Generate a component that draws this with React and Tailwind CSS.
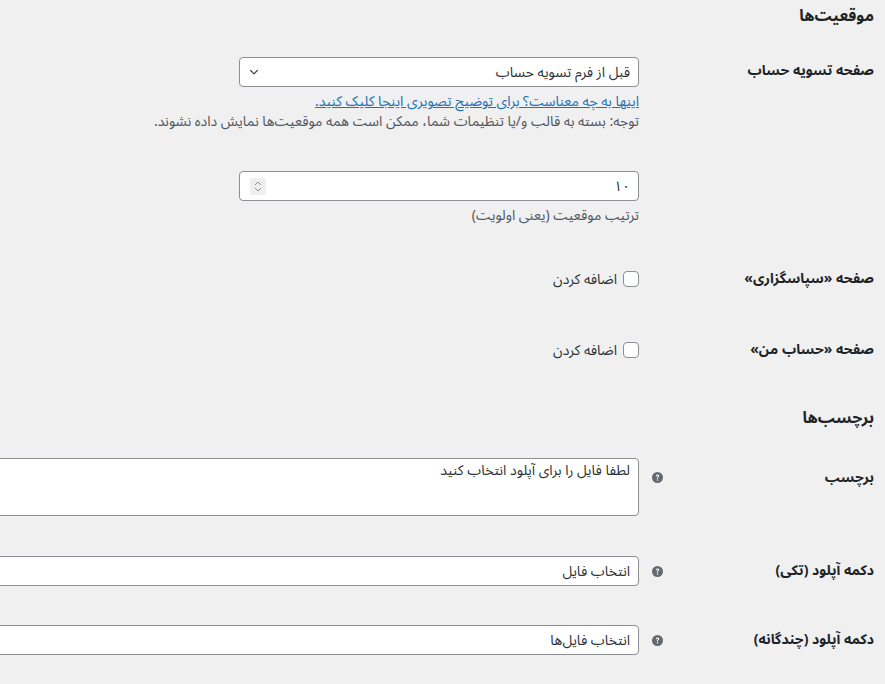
import React from "react";

function Help() {
  return (
    <svg width="11" height="11" viewBox="0 0 16 16" className="shrink-0 block">
      <circle cx="8" cy="8" r="8" fill="#646970" />
      <path d="M5.6 6.1c0-1.4 1.1-2.3 2.5-2.3 1.4 0 2.4.9 2.4 2.1 0 .9-.5 1.4-1.2 1.8-.6.4-.8.6-.8 1.2v.4H7v-.5c0-.9.4-1.4 1.1-1.8.6-.4.8-.6.8-1.1 0-.5-.4-.9-.9-.9s-.9.4-.9 1H5.6z" fill="#fff" />
      <circle cx="8" cy="11.6" r="1" fill="#fff" />
    </svg>
  );
}

function Chevron() {
  return (
    <svg width="12" height="12" viewBox="0 0 20 20" className="shrink-0 block">
      <path d="M4.5 7.5l5.5 5.5 5.5-5.5" fill="none" stroke="#3c434a" strokeWidth="2" strokeLinecap="round" strokeLinejoin="round" />
    </svg>
  );
}

function Spinner() {
  return (
    <div className="w-[16px] h-[17px] bg-[#efefef] rounded-[2px] flex flex-col items-center justify-center gap-[1px]">
      <svg width="8" height="5" viewBox="0 0 8 5" className="block"><path d="M1 4l3-3 3 3" fill="none" stroke="#8c8f94" strokeWidth="1" /></svg>
      <svg width="8" height="5" viewBox="0 0 8 5" className="block"><path d="M1 1l3 3 3-3" fill="none" stroke="#8c8f94" strokeWidth="1" /></svg>
    </div>
  );
}

function Checkbox() {
  return <span className="w-[16px] h-[16px] shrink-0 rounded-[4px] border border-[#8c8f94] bg-white" />;
}

export default function App() {
  return (
    <div
      dir="rtl"
      className="w-[885px] h-[684px] overflow-hidden bg-[#f0f0f1] pr-[11px] text-[#1d2327]"
      style={{ fontFamily: '"Noto Sans Arabic", "Vazirmatn", "DejaVu Sans", sans-serif' }}
    >
      <h2 className="h-[32px] leading-[32px] text-[16px] font-bold">موقعیت‌ها</h2>

      {/* Row 1 */}
      <div className="mt-[10px] flex">
        <div className="w-[225px] shrink-0 pt-[20px] text-[14px] leading-[18px] font-bold">صفحه تسویه حساب</div>
        <div className="flex-1 min-w-0 pr-[10px] pt-[15px]">
          <div className="w-[400px] h-[30px] rounded-[4px] border border-[#8c8f94] bg-white flex items-center justify-between pr-[8px] pl-[8px] text-[14px] text-[#2c3338]">
            <span>قبل از فرم تسویه حساب</span>
            <Chevron />
          </div>
          <p className="mt-[5px] leading-[20px] text-[14px]">
            <a className="text-[#2271b1] underline">اینها به چه معناست؟ برای توضیح تصویری اینجا کلیک کنید.</a>
          </p>
          <p className="leading-[20px] text-[14px] text-[#50575e]">
            توجه: بسته به قالب و/یا تنظیمات شما، ممکن است همه موقعیت‌ها نمایش داده نشوند.
          </p>
        </div>
      </div>

      {/* Row 2 */}
      <div className="mt-[39px] flex">
        <div className="w-[225px] shrink-0" />
        <div className="flex-1 min-w-0 pr-[10px]">
          <div className="w-[400px] h-[30px] rounded-[4px] border border-[#8c8f94] bg-white flex items-center justify-between pr-[8px] pl-[10px] text-[14px] text-[#2c3338]">
            <span>۱۰</span>
            <Spinner />
          </div>
          <p className="mt-[5px] leading-[20px] text-[14px] text-[#50575e]">ترتیب موقعیت (یعنی اولویت)</p>
        </div>
      </div>

      {/* Row 3 */}
      <div className="mt-[45px] flex items-center h-[16px]">
        <div className="w-[225px] shrink-0 text-[14px] font-bold leading-[18px]">صفحه «سپاسگزاری»</div>
        <div className="flex-1 min-w-0 pr-[10px] flex items-center gap-[6px] text-[14px] text-[#2c3338]">
          <Checkbox />
          <span>اضافه کردن</span>
        </div>
      </div>

      {/* Row 4 */}
      <div className="mt-[55px] flex items-center h-[16px]">
        <div className="w-[225px] shrink-0 text-[14px] font-bold leading-[18px]">صفحه «حساب من»</div>
        <div className="flex-1 min-w-0 pr-[10px] flex items-center gap-[6px] text-[14px] text-[#2c3338]">
          <Checkbox />
          <span>اضافه کردن</span>
        </div>
      </div>

      <h2 className="mt-[44px] h-[32px] leading-[32px] text-[16px] font-bold">برچسب‌ها</h2>

      {/* Row 5 */}
      <div className="mt-[24px] flex">
        <div className="w-[225px] shrink-0 pt-[7px] flex items-center h-[32px]">
          <span className="text-[14px] font-bold leading-[18px]">برچسب</span>
          <span className="mr-auto ml-[3px]"><Help /></span>
        </div>
        <div className="flex-1 min-w-0 pr-[10px]">
          <div className="w-[700px] h-[58px] rounded-[4px] border border-[#8c8f94] bg-white pr-[8px] pt-[2px] text-[14px] leading-[20px] text-[#2c3338]">
            لطفا فایل را برای آپلود انتخاب کنید
          </div>
        </div>
      </div>

      {/* Row 6 */}
      <div className="mt-[40px] flex items-center h-[30px]">
        <div className="w-[225px] shrink-0 flex items-center">
          <span className="text-[14px] font-bold leading-[18px]">دکمه آپلود (تکی)</span>
          <span className="mr-auto ml-[3px]"><Help /></span>
        </div>
        <div className="flex-1 min-w-0 pr-[10px]">
          <div className="w-[700px] h-[30px] rounded-[4px] border border-[#8c8f94] bg-white pr-[8px] flex items-center text-[14px] text-[#2c3338]">
            انتخاب فایل
          </div>
        </div>
      </div>

      {/* Row 7 */}
      <div className="mt-[39px] flex items-center h-[30px]">
        <div className="w-[225px] shrink-0 flex items-center">
          <span className="text-[14px] font-bold leading-[18px]">دکمه آپلود (چندگانه)</span>
          <span className="mr-auto ml-[3px]"><Help /></span>
        </div>
        <div className="flex-1 min-w-0 pr-[10px]">
          <div className="w-[700px] h-[30px] rounded-[4px] border border-[#8c8f94] bg-white pr-[8px] flex items-center text-[14px] text-[#2c3338]">
            انتخاب فایل‌ها
          </div>
        </div>
      </div>
    </div>
  );
}
